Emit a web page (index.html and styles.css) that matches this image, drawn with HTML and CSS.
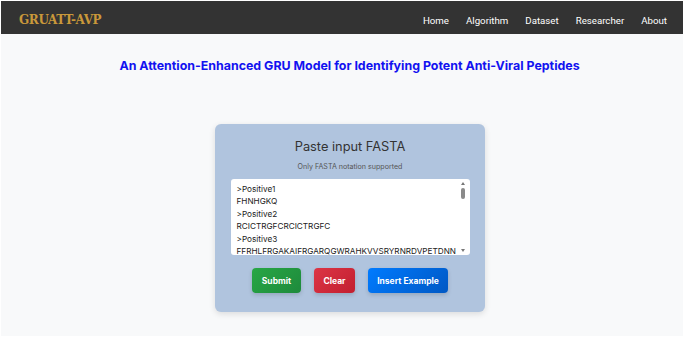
FILE: index.html
```html
<!DOCTYPE html>
<html lang="en">
<head>
    <meta charset="UTF-8">
    <meta name="viewport" content="width=device-width, initial-scale=1.0">
    <title>GRUATT-AVP</title>
    <link rel="stylesheet" href="styles.css">
</head>
<body>
    <div class="page">
        <nav class="navbar">
            <a class="brand" href="#">GRUATT-AVP</a>
            <ul class="nav-links">
                <li><a href="#">Home</a></li>
                <li><a href="#">Algorithm</a></li>
                <li><a href="#">Dataset</a></li>
                <li><a href="#">Researcher</a></li>
                <li><a href="#">About</a></li>
            </ul>
        </nav>

        <main class="content">
            <h1 class="title">An Attention-Enhanced GRU Model for Identifying Potent Anti-Viral Peptides</h1>

            <div class="fasta-card">
                <h2>Paste input FASTA</h2>
                <p class="hint">Only FASTA notation supported</p>
                <div class="input-wrap">
                    <textarea id="fasta-input" spellcheck="false">&gt;Positive1
FHNHGKQ
&gt;Positive2
RCICTRGFCRCICTRGFC
&gt;Positive3
FFRHLFRGAKAIFRGARQGWRAHKVVSRYRNRDVPETDNN
&gt;Negative1
GLFDIIKKIAESF
&gt;Negative2
KWKLFKKIGAVLKVL</textarea>
                    <!-- scrollbar drawn by hand, headless hides the native one -->
                    <div class="fake-scroll">
                        <span class="arrow up"></span>
                        <span class="thumb"></span>
                        <span class="arrow down"></span>
                    </div>
                </div>
                <div class="buttons">
                    <button class="btn btn-submit">Submit</button>
                    <button class="btn btn-clear">Clear</button>
                    <button class="btn btn-example">Insert Example</button>
                </div>
            </div>
        </main>
    </div>
</body>
</html>
```

FILE: styles.css
```css
html {
    background-color: white;
}
body {
    margin: 1px 2px 2px 1px;
    font-family: Inter, "Noto Sans", sans-serif;
}
.page {
    background-color: #f8f9fa;
    height: 335px;
    display: flex;
    flex-direction: column;
}
.navbar {
    background-color: #333333;
    height: 33px;
    display: flex;
    align-items: center;
    justify-content: space-between;
    padding: 0 16px 0 18px;
}
.brand {
    font-family: "DejaVu Serif", "Liberation Serif", serif;
    font-weight: bold;
    font-size: 12px;
    color: #c9983a;
    text-decoration: none;
    letter-spacing: -0.4px;
    margin-top: 4px;
}
.nav-links {
    list-style: none;
    display: flex;
    gap: 17px;
    margin: 1px 0 0;
    padding: 0;
}
.nav-links a {
    font-family: Roboto, sans-serif;
    font-size: 9.7px;
    color: white;
    text-decoration: none;
}
.content {
    display: flex;
    flex-direction: column;
    align-items: center;
    padding-left: 15px;
}
.title {
    color: #1212f0;
    font-size: 12.4px;
    font-weight: 700;
    margin: 24px 0 0;
}
.fasta-card {
    margin-top: 51px;
    width: 270px;
    height: 188px;
    box-sizing: border-box;
    background-color: #b0c4de;
    border-radius: 6px;
    box-shadow: 0 2px 6px rgba(0, 0, 0, 0.12);
    padding: 14px 15px 0 16px;
    text-align: center;
}
.fasta-card h2 {
    font-size: 12.8px;
    font-weight: 400;
    color: #333;
    margin: 0;
    line-height: 18px;
}
.hint {
    font-size: 7.1px;
    color: #555;
    margin: 6px 0 8px;
}
.input-wrap {
    position: relative;
    width: 239px;
    height: 76px;
}
#fasta-input {
    display: block;
    width: 100%;
    height: 100%;
    box-sizing: border-box;
    border: none;
    border-radius: 3px;
    padding: 4px 8px 3px 6px;
    font-family: Inter, sans-serif;
    font-size: 8.2px;
    line-height: 12.4px;
    color: #222;
    resize: none;
    outline: none;
    overflow: hidden;
}
.fake-scroll {
    position: absolute;
    top: 3px;
    right: 4px;
    bottom: 3px;
    width: 5px;
    display: flex;
    flex-direction: column;
    align-items: center;
}
.arrow {
    width: 0;
    height: 0;
    border-left: 2px solid transparent;
    border-right: 2px solid transparent;
}
.arrow.up {
    border-bottom: 3px solid #777;
}
.arrow.down {
    border-top: 3px solid #777;
    margin-top: auto;
}
.thumb {
    width: 4px;
    height: 11px;
    margin-top: 3px;
    background-color: #8a8a8a;
    border-radius: 2px;
}
.buttons {
    display: flex;
    justify-content: center;
    gap: 13px;
    margin-top: 13px;
}
.btn {
    border: none;
    border-radius: 4px;
    height: 25px;
    color: white;
    font-family: Inter, sans-serif;
    font-weight: 700;
    font-size: 8.5px;
    box-shadow: 0 2px 4px rgba(0, 0, 0, 0.15);
    cursor: pointer;
}
.btn-submit {
    width: 49px;
    background: linear-gradient(135deg, #28a745, #1e8a3c);
}
.btn-clear {
    width: 41px;
    background: linear-gradient(135deg, #dc3545, #c21f30);
}
.btn-example {
    width: 80px;
    background: linear-gradient(135deg, #007bff, #0058c4);
}
```
